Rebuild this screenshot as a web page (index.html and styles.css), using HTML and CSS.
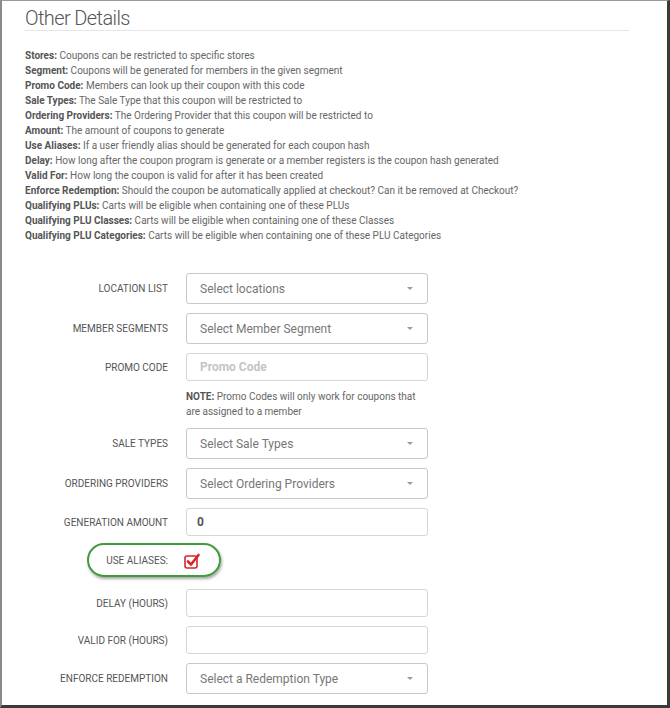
FILE: index.html
```html
<!DOCTYPE html>
<html>
<head>
<meta charset="utf-8">
<link rel="stylesheet" href="styles.css">
</head>
<body>
<div class="frame">
  <h1 class="title">Other Details</h1>
  <div class="rule"></div>
  <div class="desc">
    <p><b>Stores:</b> Coupons can be restricted to specific stores</p>
    <p><b>Segment:</b> Coupons will be generated for members in the given segment</p>
    <p><b>Promo Code:</b> Members can look up their coupon with this code</p>
    <p><b>Sale Types:</b> The Sale Type that this coupon will be restricted to</p>
    <p><b>Ordering Providers:</b> The Ordering Provider that this coupon will be restricted to</p>
    <p><b>Amount:</b> The amount of coupons to generate</p>
    <p><b>Use Aliases:</b> If a user friendly alias should be generated for each coupon hash</p>
    <p><b>Delay:</b> How long after the coupon program is generate or a member registers is the coupon hash generated</p>
    <p><b>Valid For:</b> How long the coupon is valid for after it has been created</p>
    <p><b>Enforce Redemption:</b> Should the coupon be automatically applied at checkout? Can it be removed at Checkout?</p>
    <p><b>Qualifying PLUs:</b> Carts will be eligible when containing one of these PLUs</p>
    <p><b>Qualifying PLU Classes:</b> Carts will be eligible when containing one of these Classes</p>
    <p><b>Qualifying PLU Categories:</b> Carts will be eligible when containing one of these PLU Categories</p>
  </div>

  <div class="form">
    <label class="lbl">LOCATION LIST</label>
    <div class="select"><span>Select locations</span><i class="caret"></i></div>

    <label class="lbl">MEMBER SEGMENTS</label>
    <div class="select"><span>Select Member Segment</span><i class="caret"></i></div>

    <label class="lbl">PROMO CODE</label>
    <div class="input"><span class="ph">Promo Code</span></div>

    <div class="note"><b>NOTE:</b> Promo Codes will only work for coupons that are assigned to a member</div>

    <label class="lbl">SALE TYPES</label>
    <div class="select"><span>Select Sale Types</span><i class="caret"></i></div>

    <label class="lbl">ORDERING PROVIDERS</label>
    <div class="select"><span>Select Ordering Providers</span><i class="caret"></i></div>

    <label class="lbl">GENERATION AMOUNT</label>
    <div class="input"><span class="val">0</span></div>

    <div class="alias-row">
      <label class="lbl">USE ALIASES:</label>
      <svg class="check" width="17" height="16" viewBox="0 0 17 16">
        <rect x="1" y="3" width="12" height="12" rx="2" fill="none" stroke="#d9242b" stroke-width="1.6"/>
        <path d="M4 8.5 L7 11.5 L14.5 2" fill="none" stroke="#d9242b" stroke-width="2.6" stroke-linecap="round" stroke-linejoin="round"/>
      </svg>
      <div class="highlight"></div>
    </div>

    <label class="lbl">DELAY (HOURS)</label>
    <div class="input"></div>

    <label class="lbl">VALID FOR (HOURS)</label>
    <div class="input"></div>

    <label class="lbl">ENFORCE REDEMPTION</label>
    <div class="select"><span>Select a Redemption Type</span><i class="caret"></i></div>
  </div>
</div>
</body>
</html>
```

FILE: styles.css
```css
* { box-sizing: border-box; }
html, body { margin: 0; padding: 0; background: #fff; }
body { font-family: Roboto, "Liberation Sans", sans-serif; color: #555; }

.frame {
  width: 670px;
  height: 708px;
  border-left: 2px solid #8a8a8a;
  border-top: 1px solid #9a9a9a;
  border-right: 3px solid #3a3a3a;
  border-bottom: 3px solid #3a3a3a;
  overflow: hidden;
  padding: 0 0 0 23px;
}

.title {
  margin: 5px 0 0 0;
  font-size: 20px;
  font-weight: 300;
  color: #555;
  line-height: 24px;
  letter-spacing: -0.6px;
}

.rule {
  width: 604px;
  height: 1px;
  background: #e6e6e6;
  margin-top: 0;
}

.desc {
  margin-top: 17px;
  font-size: 10px;
  line-height: 15px;
  color: #666;
}
.desc p { margin: 0; white-space: nowrap; }
.desc b { color: #555; font-weight: 700; }

.form {
  display: grid;
  grid-template-columns: 143px 242px;
  column-gap: 18px;
  row-gap: 9px;
  margin-top: 30px;
  align-items: center;
}

.lbl {
  text-align: right;
  font-size: 10px;
  color: #555;
}

.select, .input {
  height: 31px;
  border: 1px solid #c8c8c8;
  border-radius: 3px;
  display: flex;
  align-items: center;
  padding: 0 14px 0 13px;
  font-size: 12px;
  color: #777;
}
.input { height: 28px; border-color: #d6d6d6; }
.select span { flex: 1; }
.caret {
  width: 0; height: 0;
  border-left: 3.5px solid transparent;
  border-right: 3.5px solid transparent;
  border-top: 3.5px solid #999;
}
.ph { color: #c4c4c4; font-weight: 700; }
.val { color: #555; font-weight: 700; margin-left: -3px; }

.note {
  grid-column: 2;
  font-size: 10px;
  line-height: 15px;
  color: #666;
  margin: -1px 0 0 0;
  padding-right: 6px;
}
.note b { color: #555; }

.alias-row {
  grid-column: 1 / 3;
  display: grid;
  grid-template-columns: 143px auto;
  column-gap: 16px;
  align-items: center;
  height: 35px;
  position: relative;
}
.alias-row .lbl { margin-bottom: 4px; }
.check { display: block; margin-bottom: 4px; }

.highlight {
  position: absolute;
  left: 62px;
  top: -2px;
  width: 134px;
  height: 34px;
  border: 2px solid #3f9b3b;
  border-radius: 17px;
  box-shadow: 1px 2px 3px rgba(0,0,0,0.35);
  pointer-events: none;
}
```
